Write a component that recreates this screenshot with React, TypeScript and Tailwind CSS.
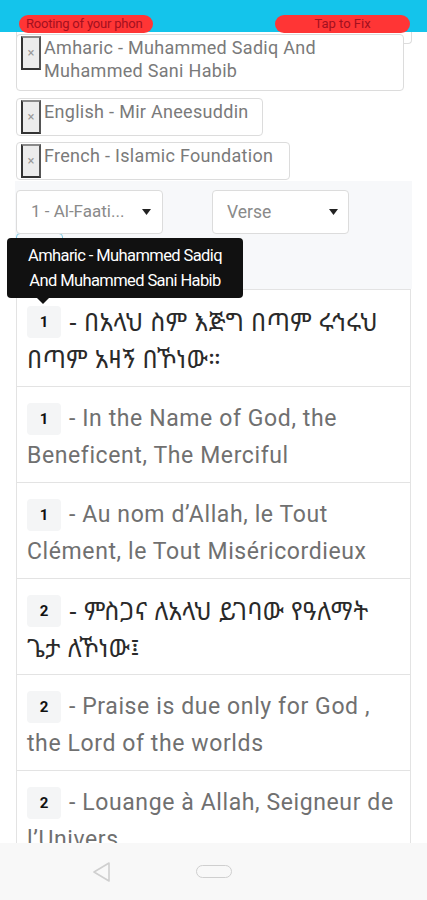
import React from 'react';

type Verse = { n: number; first: string; second: string; amharic?: boolean };

const verses: Verse[] = [
  { n: 1, first: '- በአላህ ስም እጅግ በጣም ሩኅሩህ', second: 'በጣም አዛኝ በኾነው።', amharic: true },
  { n: 1, first: '- In the Name of God, the', second: 'Beneficent, The Merciful' },
  { n: 1, first: '- Au nom d’Allah, le Tout', second: 'Clément, le Tout Miséricordieux' },
  { n: 2, first: '- ምስጋና ለአላህ ይገባው የዓለማት', second: 'ጌታ ለኾነው፤', amharic: true },
  { n: 2, first: '- Praise is due only for God ,', second: 'the Lord of the worlds' },
  { n: 2, first: '- Louange à Allah, Seigneur de', second: 'l’Univers' },
];

function Chip({ label, width }: { label: React.ReactNode; width: string }) {
  return (
    <div className={`flex items-start gap-[3px] rounded-[4px] border border-[#dcdcdc] bg-white pl-[4px] pt-[1px] pb-[1px] ${width}`}>
      <span className="flex h-[34px] w-[20px] shrink-0 items-center justify-center border-2 border-[#333] border-t-[#8a8a8a] border-r-[#555] bg-[#ececec] text-[13px] text-[#999]">
        ×
      </span>
      <span className="whitespace-nowrap text-[18px] leading-[23px] tracking-[0.3px] text-[#7a7a7a]">{label}</span>
    </div>
  );
}

function Caret() {
  return (
    <svg width="9" height="6" viewBox="0 0 9 6">
      <path d="M0 0h9L4.5 6z" fill="#222" />
    </svg>
  );
}

export default function App() {
  return (
    <div className="flex h-[900px] w-[427px] flex-col overflow-hidden bg-white font-['Roboto',sans-serif]">
      <div className="flex-1 overflow-hidden">
        {/* Top banner */}
        <div className="flex h-[32px] items-end justify-between bg-[#14c4eb] pl-[19px] pr-[17px]">
          <div className="relative top-[1px] flex h-[18px] w-[134px] items-center overflow-hidden whitespace-nowrap rounded-full bg-[#ff3535] pl-[7px] text-[13px] tracking-[-0.2px] text-[#a3101f]">
            Rooting of your phon
          </div>
          <div className="relative top-[1px] flex h-[18px] w-[135px] items-center justify-center rounded-full bg-[#ff3535] text-[13px] text-[#a3101f]">
            Tap to Fix
          </div>
        </div>

        {/* selected translations */}
        <div className="px-[16px]">
          <div className="mr-[-1px] h-[12px] rounded-b-[4px] border border-t-0 border-[#dcdcdc]" />
          <div className="relative mt-[-10px] flex flex-col gap-[6px]">
            <Chip width="w-[388px] pb-[8px]" label={<>Amharic - Muhammed Sadiq And<br />Muhammed Sani Habib</>} />
            <Chip width="w-[247px] mt-[1px]" label="English - Mir Aneesuddin" />
            <Chip width="w-[274px]" label="French - Islamic Foundation" />
          </div>
        </div>

        {/* selectors */}
        <div className="relative mx-[15px] mt-[1px] bg-[#f7f8fa] pl-[1px] pt-[9px] pb-[22px]">
          <div className="flex gap-[49px]">
            <div className="flex h-[44px] w-[147px] items-center justify-between rounded-[4px] border border-[#dcdcdc] bg-white pl-[14px] pr-[11px] text-[17px] text-[#8a8a8a]">
              <span>1 - Al-Faati...</span>
              <Caret />
            </div>
            <div className="flex h-[44px] w-[137px] items-center justify-between rounded-[4px] border border-[#dcdcdc] bg-white pl-[14px] pr-[10px] text-[17.5px] text-[#8a8a8a]">
              <span>Verse</span>
              <Caret />
            </div>
          </div>
          <div className="mt-[-1px] h-[34px] w-[47px] rounded-[4px] border border-[#7fcbe6]" />

          {/* tooltip */}
          <div className="absolute left-[-8px] top-[57px] z-10 w-[236px] rounded-[4px] bg-[#111] px-[4px] py-[5px] text-center text-[16.5px] leading-[25px] tracking-[-0.6px] text-white">
            Amharic - Muhammed Sadiq
            <br />
            And Muhammed Sani Habib
            <span className="absolute left-[29px] bottom-[-6px] h-0 w-0 border-x-[7px] border-t-[7px] border-x-transparent border-t-[#111]" />
          </div>
        </div>

        {/* verses */}
        <div className="mx-[16px] border border-[#e3e3e3]">
          {verses.map((v, i) => (
            <div
              key={i}
              className={`h-[96px] whitespace-nowrap px-[10px] pt-[14px] ${i > 0 ? 'border-t border-[#e3e3e3]' : ''} ${
                v.amharic
                  ? "font-['Noto_Sans_Ethiopic','DejaVu_Sans',sans-serif] text-[24.5px] tracking-[0.4px] text-[#2a2a2a]"
                  : 'text-[23px] tracking-[0.6px] text-[#707070]'
              }`}
            >
              <div className="flex h-[36px] items-center">
                <span className="mr-[8px] flex h-[32px] w-[34px] items-center justify-center rounded-[4px] bg-[#f4f5f6] font-['Roboto',sans-serif] text-[15px] font-bold tracking-normal text-[#111]">
                  {v.n}
                </span>
                <span>{v.first}</span>
              </div>
              <div className="flex h-[38px] items-center">{v.second}</div>
            </div>
          ))}
        </div>
      </div>

      {/* nav bar */}
      <div className="flex h-[57px] shrink-0 items-center bg-[#f8f8f8] pl-[92px]">
        <svg width="20" height="22" viewBox="0 0 20 22" className="mt-[1px]">
          <path d="M17 2 L2 11 L17 20 Z" fill="none" stroke="#cfcfcf" strokeWidth="1.6" strokeLinejoin="round" />
        </svg>
        <div className="ml-[84px] h-[13px] w-[36px] rounded-full border-[1.5px] border-[#cfcfcf]" />
      </div>
    </div>
  );
}
